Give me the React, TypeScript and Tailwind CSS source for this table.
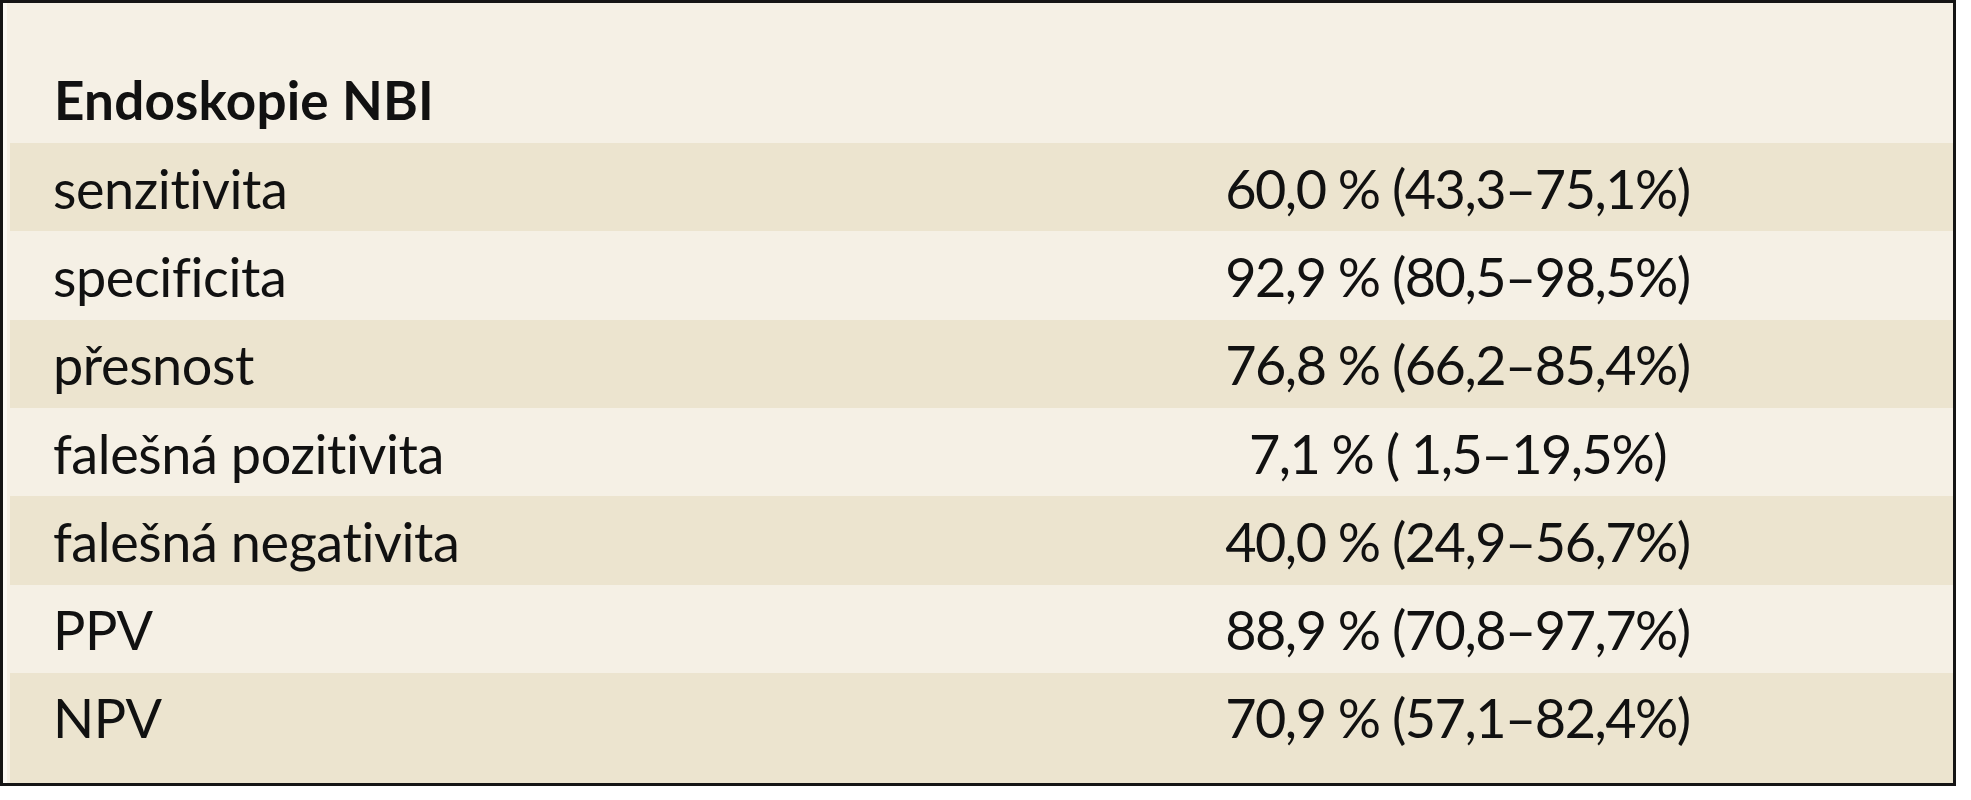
import React from 'react';

const rows: [string, string][] = [
  ['senzitivita', '60,0 % (43,3–75,1%)'],
  ['specificita', '92,9 % (80,5–98,5%)'],
  ['přesnost', '76,8 % (66,2–85,4%)'],
  ['falešná pozitivita', '7,1 % ( 1,5–19,5%)'],
  ['falešná negativita', '40,0 % (24,9–56,7%)'],
  ['PPV', '88,9 % (70,8–97,7%)'],
  ['NPV', '70,9 % (57,1–82,4%)'],
];

export default function App() {
  return (
    <div className="bg-white w-[1971px] h-[800px] font-['Lato',sans-serif] text-[#111]">
      <div className="w-[1956px] h-[786px] border-[3px] border-[#151515] flex">
        <div className="flex-1 border-l-[4px] border-[#fbf9f3] bg-[#f5f0e5] pl-[3px] flex flex-col">
          <div className="h-[140px] flex items-end pb-[17px] pl-[44px] text-[53px] font-bold leading-none tracking-[0.2px]">
            Endoskopie NBI
          </div>
          {rows.map(([label, value], i) => {
            const last = i === rows.length - 1;
            return (
              <div
                key={label}
                className={
                  (i % 2 === 0 ? 'bg-[#ece4cf] ' : 'bg-[#f5f0e5] ') +
                  (last ? 'h-[110px] pb-[22px] ' : 'h-[88.33px] ') +
                  'flex items-center pt-[3px] text-[54px] leading-none'
                }
              >
                <div className="w-[952px] pl-[43px] tracking-[-0.4px]">{label}</div>
                <div className="flex-1 text-center tracking-[-1.5px]">{value}</div>
              </div>
            );
          })}
        </div>
      </div>
    </div>
  );
}
